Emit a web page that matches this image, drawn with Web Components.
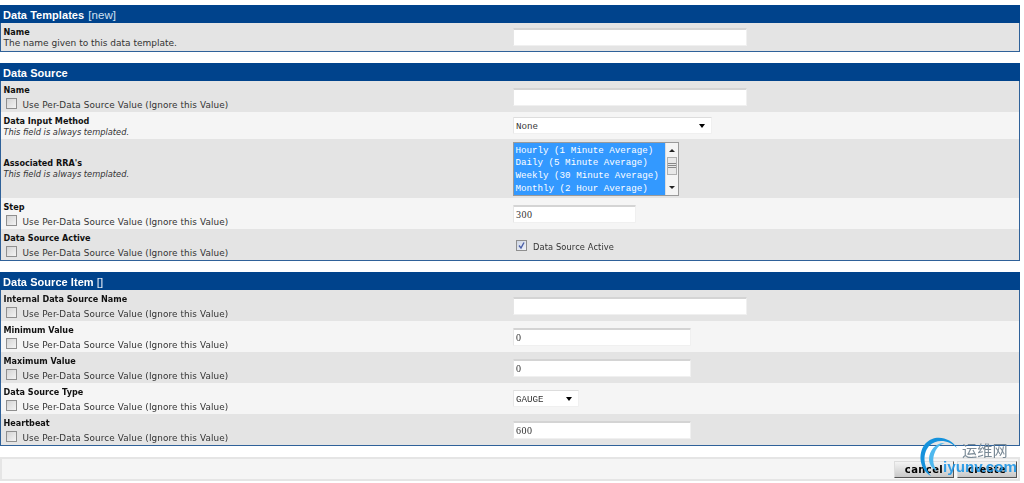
<!DOCTYPE html>
<html><head><meta charset="utf-8"><title>Data Templates</title>
<style>
html,body{margin:0;padding:0;background:#fff}
body{font-family:"DejaVu Sans",sans-serif;font-size:9px;color:#000;width:1024px;height:483px;overflow:hidden;position:relative}
</style></head><body>
<cacti-page>
<data-panel><span>Data Templates <span style="font:11.5px 'Liberation Sans',sans-serif;color:#cfe0f2;margin-left:1px">[new]</span></span>
 <form-row alt first label="Name" desc="The name given to this data template."><text-box w="234"></text-box></form-row>
</data-panel>
<data-panel><span>Data Source</span>
 <form-row alt label="Name" use><text-box w="234"></text-box></form-row>
 <form-row label="Data Input Method" desc="This field is always templated." italic><drop-down w="199">None</drop-down></form-row>
 <form-row alt tall label="Associated RRA's" desc="This field is always templated." italic>
  <list-box><span>Hourly (1 Minute Average)</span><span>Daily (5 Minute Average)</span><span>Weekly (30 Minute Average)</span><span>Monthly (2 Hour Average)</span></list-box></form-row>
 <form-row label="Step" use><text-box w="123" num>300</text-box></form-row>
 <form-row alt label="Data Source Active" use><check-line checked>Data Source Active</check-line></form-row>
</data-panel>
<data-panel><span>Data Source Item <span style="font:11.5px 'Liberation Sans',sans-serif;color:#e8eff7">[]</span></span>
 <form-row alt label="Internal Data Source Name" use><text-box w="234"></text-box></form-row>
 <form-row label="Minimum Value" use><text-box w="178" num>0</text-box></form-row>
 <form-row alt label="Maximum Value" use><text-box w="178" num>0</text-box></form-row>
 <form-row label="Data Source Type" use><drop-down w="66">GAUGE</drop-down></form-row>
 <form-row alt label="Heartbeat" use><text-box w="178" num>600</text-box></form-row>
</data-panel>
<action-bar><push-button>cancel</push-button><push-button>create</push-button></action-bar>
</cacti-page>
<site-mark></site-mark>
<script>
function def(name,css,html,extra){
  customElements.define(name,class extends HTMLElement{
    connectedCallback(){
      if(this.shadowRoot)return;
      const r=this.attachShadow({mode:'open'});
      r.innerHTML='<style>'+css+'</style>'+(typeof html==='function'?html(this):html);
      if(extra)extra(this,r);
    }
  });
}
const box='box-sizing:border-box;background:#fff;border:1px solid #f0f0f0;border-top:2px solid #d4d4d4;border-left:1px solid #e6e6e6;border-radius:1px;';
const mono='font:9.2px/1 "Liberation Mono",monospace;color:#333;';
def('cacti-page',':host{display:flex;flex-direction:column;gap:11px;padding-top:5px;width:1020px;filter:blur(.35px)}','<slot></slot>');
def('data-panel',`:host{display:block;border:1px solid #2f6199;border-top:0;background:#fff}
 .h{height:18px;margin:0 -1px;background:#00438c;color:#fff;font:bold 11px/16px "Liberation Sans",sans-serif;letter-spacing:.05px;padding:2px 0 0 3px;box-sizing:border-box}`,
 '<div class="h"><slot name="t"></slot></div><slot></slot>',(el)=>{el.firstElementChild.slot='t'});
def('form-row',`:host{display:grid;grid-template-columns:511px 1fr;background:#f5f5f5;font:9px/11px "DejaVu Sans",sans-serif;color:#333}
 :host([alt]){background:#e4e4e4}
 .l{padding:4px 0 0 2.5px;box-sizing:border-box}
 :host([tall]) .l{align-self:center;padding-top:0}
 b{display:block;font-weight:bold;font-size:8.1px;color:#111}
 i{display:block;font-style:normal}
 :host([italic]) i{font-style:italic;font-size:8.27px}
 check-line{margin-top:2px}
 .r{display:flex;align-items:center;min-height:27px;padding-left:1px}
 :host([first]) .r{min-height:28px}
 :host([use]) .r{min-height:31px}
 :host([tall]) .r{min-height:59px}`,
 el=>`<div class="l"><b>${el.getAttribute('label')}</b>${el.hasAttribute('desc')?`<i>${el.getAttribute('desc')}</i>`:''}${el.hasAttribute('use')?'<check-line>Use Per-Data Source Value (Ignore this Value)</check-line>':''}</div><div class="r"><slot></slot></div>`);
def('text-box',`:host{display:block;${box}height:18px;padding:0 2px;${mono}line-height:16px}
 :host([num]){font:10px/16px "Liberation Serif",serif;letter-spacing:.5px}`,'<slot></slot>',el=>{el.style.width=el.getAttribute('w')+'px'});
def('drop-down',`:host{display:flex;align-items:center;justify-content:space-between;${box}border-top-width:1px;border-top-color:#ddd;height:17px;padding:2px 6px 0 2px;${mono}}
 s{width:0;height:0;margin-top:-2px;border:3.5px solid transparent;border-top:4px solid #000;border-bottom:0}`,'<slot></slot><s></s>',el=>{el.style.width=el.getAttribute('w')+'px'});
def('list-box',`:host{display:flex;box-sizing:border-box;width:166px;height:54px;border:1px solid #9a9a9a;background:#fff}
 .o{flex:1;min-width:0;background:#3399ff;color:#fff;font:9.2px/12.7px "Liberation Mono",monospace;padding:2px 0 0 1.5px;display:flex;flex-direction:column}
 ::slotted(span){display:block;white-space:nowrap}
 .s{width:13px;flex:none;background:#f4f4f4;border-left:1px solid #ddd;position:relative;display:flex;flex-direction:column;align-items:center;justify-content:space-between;padding:6px 0;box-sizing:border-box}
 .u{width:0;height:0;border:3px solid transparent;border-bottom:3px solid #222;border-top:0}
 .d{width:0;height:0;border:3px solid transparent;border-top:3px solid #222;border-bottom:0}
 .t{position:absolute;left:1px;top:14px;width:10px;height:18px;box-sizing:border-box;border:1px solid #b0b0b0;background:linear-gradient(#e8e8e8 0 5px,#888 5px 6px,#e8e8e8 6px 7px,#888 7px 8px,#e8e8e8 8px 9px,#888 9px 10px,#e8e8e8 10px)}`,
 '<div class="o"><slot></slot></div><div class="s"><span class="u"></span><span class="t"></span><span class="d"></span></div>');
def('check-line',`:host{display:flex;align-items:center;height:14px;white-space:nowrap;font:8.85px/14px "DejaVu Sans",sans-serif;color:#333;letter-spacing:.1px}
 .c{box-sizing:border-box;width:11px;height:11px;border:1px solid #8f8f8f;background:linear-gradient(135deg,#d4d4d4,#f4f4f4);margin:-3px 6px 0 2px;flex:none;display:flex}
 :host([checked]){margin:5px 0 0 3px;font-size:8.3px}
 :host([checked]) .c{margin:-3px 6px 0 0;background:linear-gradient(135deg,#cfd6e4,#f0f2f8)}`,
 el=>`<span class="c">${el.hasAttribute('checked')?'<svg width="9" height="9" viewBox="0 0 9 9"><path d="M2 4.5L4 7L7 1.5" fill="none" stroke="#4a5fa8" stroke-width="1.4"/></svg>':''}</span><slot></slot>`);
def('action-bar',`:host{display:flex;justify-content:flex-end;gap:3px;box-sizing:border-box;height:24px;padding:1px 1px 0 0;align-items:center;border:2px solid #e5e5e5;background:#f5f5f5}`,'<slot></slot>');
def('push-button',`:host{display:block;box-sizing:border-box;width:60px;height:17px;background:linear-gradient(#f4f4f4,#c8c8c8);border:1px solid;border-color:#ddd #555 #555 #ddd;font:bold 10px/15px "DejaVu Sans",sans-serif;letter-spacing:.4px;text-align:center;color:#000}`,'<slot></slot>');
def('site-mark',`:host{position:absolute;left:915px;top:432px;width:109px;height:51px;display:block;pointer-events:none}
 svg{position:absolute;left:0;top:0}
 .a{position:absolute;left:47px;top:7px;font:15.2px/20px "Noto Sans CJK SC",sans-serif;color:#7a8a96;white-space:nowrap}
 .b{position:absolute;left:28px;top:25px;font:bold 15.2px/20px "Liberation Sans",sans-serif;color:#1e96e6;white-space:nowrap;opacity:.9}`,
 `<svg width="50" height="51" viewBox="0 0 50 51"><path d="M42 16C36 6 20 1 10 12C2 22 5 38 16 44C10 36 6 24 14 14C22 6 34 8 42 16Z" fill="#1592dc"/><path d="M30 11C22 10 14 18 14 27C14 32 17 37 22 39C18 33 17 27 20 20C22 15 26 12 30 11Z" fill="#4fb8ee"/></svg><div class="a">运维网</div><div class="b">iyunv.com</div>`);
</script>
</body></html>
